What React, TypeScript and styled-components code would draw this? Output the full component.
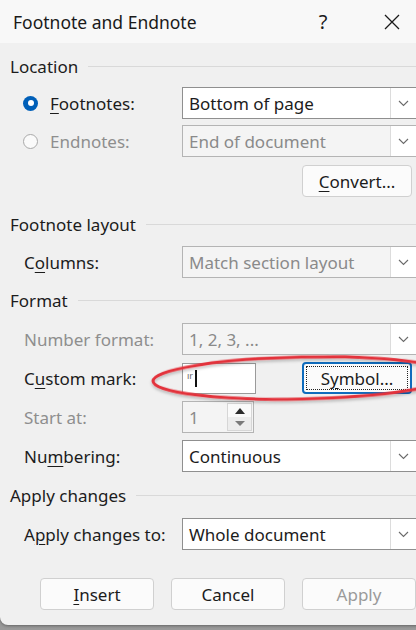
import styled, { createGlobalStyle } from 'styled-components'

const GlobalStyle = createGlobalStyle`
  html, body {
    margin: 0;
    padding: 0;
  }
  body {
    background: #a9a9a9;
    font-family: 'Noto Sans', 'Open Sans', sans-serif;
  }
`

const Screen = styled.div`
  width: 416px;
  height: 630px;
  overflow: hidden;
  background: linear-gradient(#bdbdbd, #9a9a9a);
`

const Dialog = styled.div`
  position: relative;
  width: 436px;
  height: 625px;
  background: #f0f0f0;
  border-bottom-left-radius: 8px;
  box-shadow: 0 1px 3px rgba(0, 0, 0, 0.35);
  display: flex;
  flex-direction: column;
  color: #1c1c1c;
`

const TitleBar = styled.div`
  height: 43px;
  flex-shrink: 0;
  background: #f8f8f8;
  display: flex;
  align-items: center;
  padding: 0 21px 0 13px;
`

const TitleText = styled.div`
  flex: 1;
  font-size: 17.5px;
  color: #1a1a1a;
`

const TitleButton = styled.div<{ $width: number }>`
  width: ${({ $width }) => $width}px;
  height: 43px;
  display: flex;
  align-items: center;
  justify-content: center;
  font-size: 20px;
  color: #1a1a1a;
`

const Body = styled.div`
  padding: 13px 0 0 10px;
  display: flex;
  flex-direction: column;
`

const Section = styled.div<{ $top?: number; $gap?: number }>`
  margin-top: ${({ $top }) => $top ?? 0}px;
  display: flex;
  flex-direction: column;
  gap: ${({ $gap }) => $gap ?? 6}px;
`

const SectionHeader = styled.div<{ $below?: number }>`
  height: 20px;
  display: flex;
  align-items: center;
  gap: 10px;
  font-size: 17px;
  margin-bottom: ${({ $below }) => ($below ?? 12) - 6}px;

  &::after {
    content: '';
    flex: 1;
    height: 1px;
    background: #d9d9d9;
  }
`

const Row = styled.div<{ $indent?: number }>`
  display: flex;
  align-items: center;
  padding-left: ${({ $indent }) => $indent ?? 14}px;
`

const Label = styled.div<{ $width?: number; $disabled?: boolean }>`
  width: ${({ $width }) => $width ?? 158}px;
  flex-shrink: 0;
  font-size: 17px;
  color: ${({ $disabled }) => ($disabled ? '#8e8e8e' : '#1c1c1c')};

  u {
    text-underline-offset: 3px;
    text-decoration-thickness: 1px;
  }
`

const Radio = styled.div<{ $checked?: boolean }>`
  width: 15px;
  height: 15px;
  border-radius: 50%;
  box-sizing: border-box;
  margin-right: 12px;
  flex-shrink: 0;
  display: flex;
  align-items: center;
  justify-content: center;
  background: ${({ $checked }) => ($checked ? '#005fb8' : '#fafafa')};
  border: ${({ $checked }) => ($checked ? 'none' : '1px solid #a9a9a9')};

  &::after {
    content: '';
    display: ${({ $checked }) => ($checked ? 'block' : 'none')};
    width: 6px;
    height: 6px;
    border-radius: 50%;
    background: #fff;
  }
`

const SelectBox = styled.div<{ $disabled?: boolean }>`
  width: 236px;
  height: 32px;
  box-sizing: border-box;
  display: flex;
  border: 1px solid ${({ $disabled }) => ($disabled ? '#b4b4b4' : '#8f8f8f')};
  background: ${({ $disabled }) => ($disabled ? '#f4f4f4' : '#ffffff')};
`

const SelectValue = styled.div<{ $disabled?: boolean }>`
  flex: 1;
  display: flex;
  align-items: center;
  padding-left: 6px;
  font-size: 17px;
  color: ${({ $disabled }) => ($disabled ? '#8a8a8a' : '#1c1c1c')};
`

const ChevronBox = styled.div`
  width: 24px;
  border-left: 1px solid #dcdcdc;
  background: #fff;
  display: flex;
  align-items: center;
  justify-content: center;
  padding-right: 2px;
`

const TextBox = styled.div`
  width: 74px;
  height: 31px;
  box-sizing: border-box;
  border: 1px solid #9a9a9a;
  background: #fff;
  display: flex;
  align-items: center;
  padding-left: 4px;
`

const MarkText = styled.span`
  font-size: 9px;
  color: #6a6a6a;
  margin-top: -5px;
`

const Caret = styled.span`
  width: 2px;
  height: 17px;
  background: #111;
  margin-left: 2px;
`

const Spinner = styled.div`
  width: 72px;
  height: 32px;
  box-sizing: border-box;
  border: 1px solid #b4b4b4;
  background: #f4f4f4;
  display: flex;
`

const SpinValue = styled.div`
  flex: 1;
  display: flex;
  align-items: center;
  padding-left: 6px;
  font-size: 17px;
  color: #8a8a8a;
`

const SpinButtons = styled.div`
  width: 23px;
  margin: 1px;
  border: 1px solid #d6d6d6;
  display: flex;
  flex-direction: column;
`

const SpinHalf = styled.div<{ $down?: boolean }>`
  flex: 1;
  display: flex;
  align-items: center;
  justify-content: center;
  background: ${({ $down }) => ($down ? '#ededed' : '#fafafa')};

  &::after {
    content: '';
    border-left: 5px solid transparent;
    border-right: 5px solid transparent;
    ${({ $down }) =>
      $down ? 'border-top: 5px solid #7a7a7a;' : 'border-bottom: 6px solid #2c2c2c;'}
  }
`

const PushButton = styled.div<{ $width?: number; $disabled?: boolean; $focused?: boolean }>`
  width: ${({ $width }) => $width ?? 110}px;
  height: 32px;
  box-sizing: border-box;
  border-radius: 4px;
  background: #fbfbfb;
  border: ${({ $focused }) => ($focused ? '2px solid #0f6cbd' : '1px solid #d0d0d0')};
  display: flex;
  align-items: center;
  justify-content: center;
  font-size: 17px;
  color: ${({ $disabled }) => ($disabled ? '#9a9a9a' : '#1c1c1c')};
  padding: 2px;

  u {
    text-underline-offset: 3px;
    text-decoration-thickness: 1px;
  }
`

const FocusRing = styled.div`
  width: 100%;
  height: 100%;
  box-sizing: border-box;
  border: 1px dotted #222;
  display: flex;
  align-items: center;
  justify-content: center;
`

const ButtonRow = styled.div`
  display: flex;
  padding-left: 292px;
  margin-top: 2px;
`

const Footer = styled.div`
  display: flex;
  gap: 17px;
  padding-left: 30px;
  margin-top: 28px;
`

const Annotation = styled.svg`
  position: absolute;
  left: 0;
  top: 0;
  width: 436px;
  height: 625px;
  pointer-events: none;
  overflow: visible;
`

const Chevron = () => (
  <svg width="11" height="7" viewBox="0 0 11 7">
    <path d="M1 1l4.5 4.5L10 1" fill="none" stroke="#6a6a6a" strokeWidth="1.1" />
  </svg>
)

const Select = ({ value, disabled }: { value: string; disabled?: boolean }) => (
  <SelectBox $disabled={disabled}>
    <SelectValue $disabled={disabled}>{value}</SelectValue>
    <ChevronBox>
      <Chevron />
    </ChevronBox>
  </SelectBox>
)

export default function App() {
  return (
    <>
      <GlobalStyle />
      <Screen>
        <Dialog>
          <TitleBar>
            <TitleText>Footnote and Endnote</TitleText>
            <TitleButton $width={46}>?</TitleButton>
            <TitleButton $width={23} />
            <TitleButton $width={46}>
              <svg width="16" height="16" viewBox="0 0 16 16">
                <path d="M1 1l14 14M15 1L1 15" stroke="#1a1a1a" strokeWidth="1.3" />
              </svg>
            </TitleButton>
          </TitleBar>

          <Body>
            <Section>
              <SectionHeader $below={11}>Location</SectionHeader>
              <Row $indent={13}>
                <Radio $checked />
                <Label $width={132}>
                  <u>F</u>ootnotes:
                </Label>
                <Select value="Bottom of page" />
              </Row>
              <Row $indent={13}>
                <Radio />
                <Label $width={132} $disabled>
                  Endnotes:
                </Label>
                <Select value="End of document" disabled />
              </Row>
              <ButtonRow>
                <PushButton>
                  <span>
                    <u>C</u>onvert...
                  </span>
                </PushButton>
              </ButtonRow>
            </Section>

            <Section $top={17}>
              <SectionHeader>Footnote layout</SectionHeader>
              <Row>
                <Label>
                  C<u>o</u>lumns:
                </Label>
                <Select value="Match section layout" disabled />
              </Row>
            </Section>

            <Section $top={12} $gap={7}>
              <SectionHeader>Format</SectionHeader>
              <Row>
                <Label $disabled>Number format:</Label>
                <Select value="1, 2, 3, ..." disabled />
              </Row>
              <Row>
                <Label>
                  C<u>u</u>stom mark:
                </Label>
                <TextBox>
                  <MarkText>ır</MarkText>
                  <Caret />
                </TextBox>
                <PushButton $focused style={{ marginLeft: 46 }}>
                  <FocusRing>
                    <span>
                      S<u>y</u>mbol...
                    </span>
                  </FocusRing>
                </PushButton>
              </Row>
              <Row>
                <Label $disabled>Start at:</Label>
                <Spinner>
                  <SpinValue>1</SpinValue>
                  <SpinButtons>
                    <SpinHalf />
                    <SpinHalf $down />
                  </SpinButtons>
                </Spinner>
              </Row>
              <Row>
                <Label>
                  Nu<u>m</u>bering:
                </Label>
                <Select value="Continuous" />
              </Row>
            </Section>

            <Section $top={13}>
              <SectionHeader $below={13}>Apply changes</SectionHeader>
              <Row>
                <Label>
                  A<u>p</u>ply changes to:
                </Label>
                <Select value="Whole document" />
              </Row>
            </Section>

            <Footer>
              <PushButton $width={114}>
                <span>
                  <u>I</u>nsert
                </span>
              </PushButton>
              <PushButton $width={114}>Cancel</PushButton>
              <PushButton $width={114} $disabled>
                Apply
              </PushButton>
            </Footer>
          </Body>

          <Annotation viewBox="0 0 436 625">
            <defs>
              <filter id="inkShadow" x="-10%" y="-50%" width="120%" height="200%">
                <feDropShadow dx="0" dy="2" stdDeviation="1.5" floodColor="#000" floodOpacity="0.25" />
              </filter>
            </defs>
            <ellipse
              cx="302"
              cy="378"
              rx="149"
              ry="21"
              transform="rotate(-1.2 302 378)"
              fill="none"
              stroke="#e3313b"
              strokeWidth="3"
              filter="url(#inkShadow)"
            />
          </Annotation>
        </Dialog>
      </Screen>
    </>
  )
}
